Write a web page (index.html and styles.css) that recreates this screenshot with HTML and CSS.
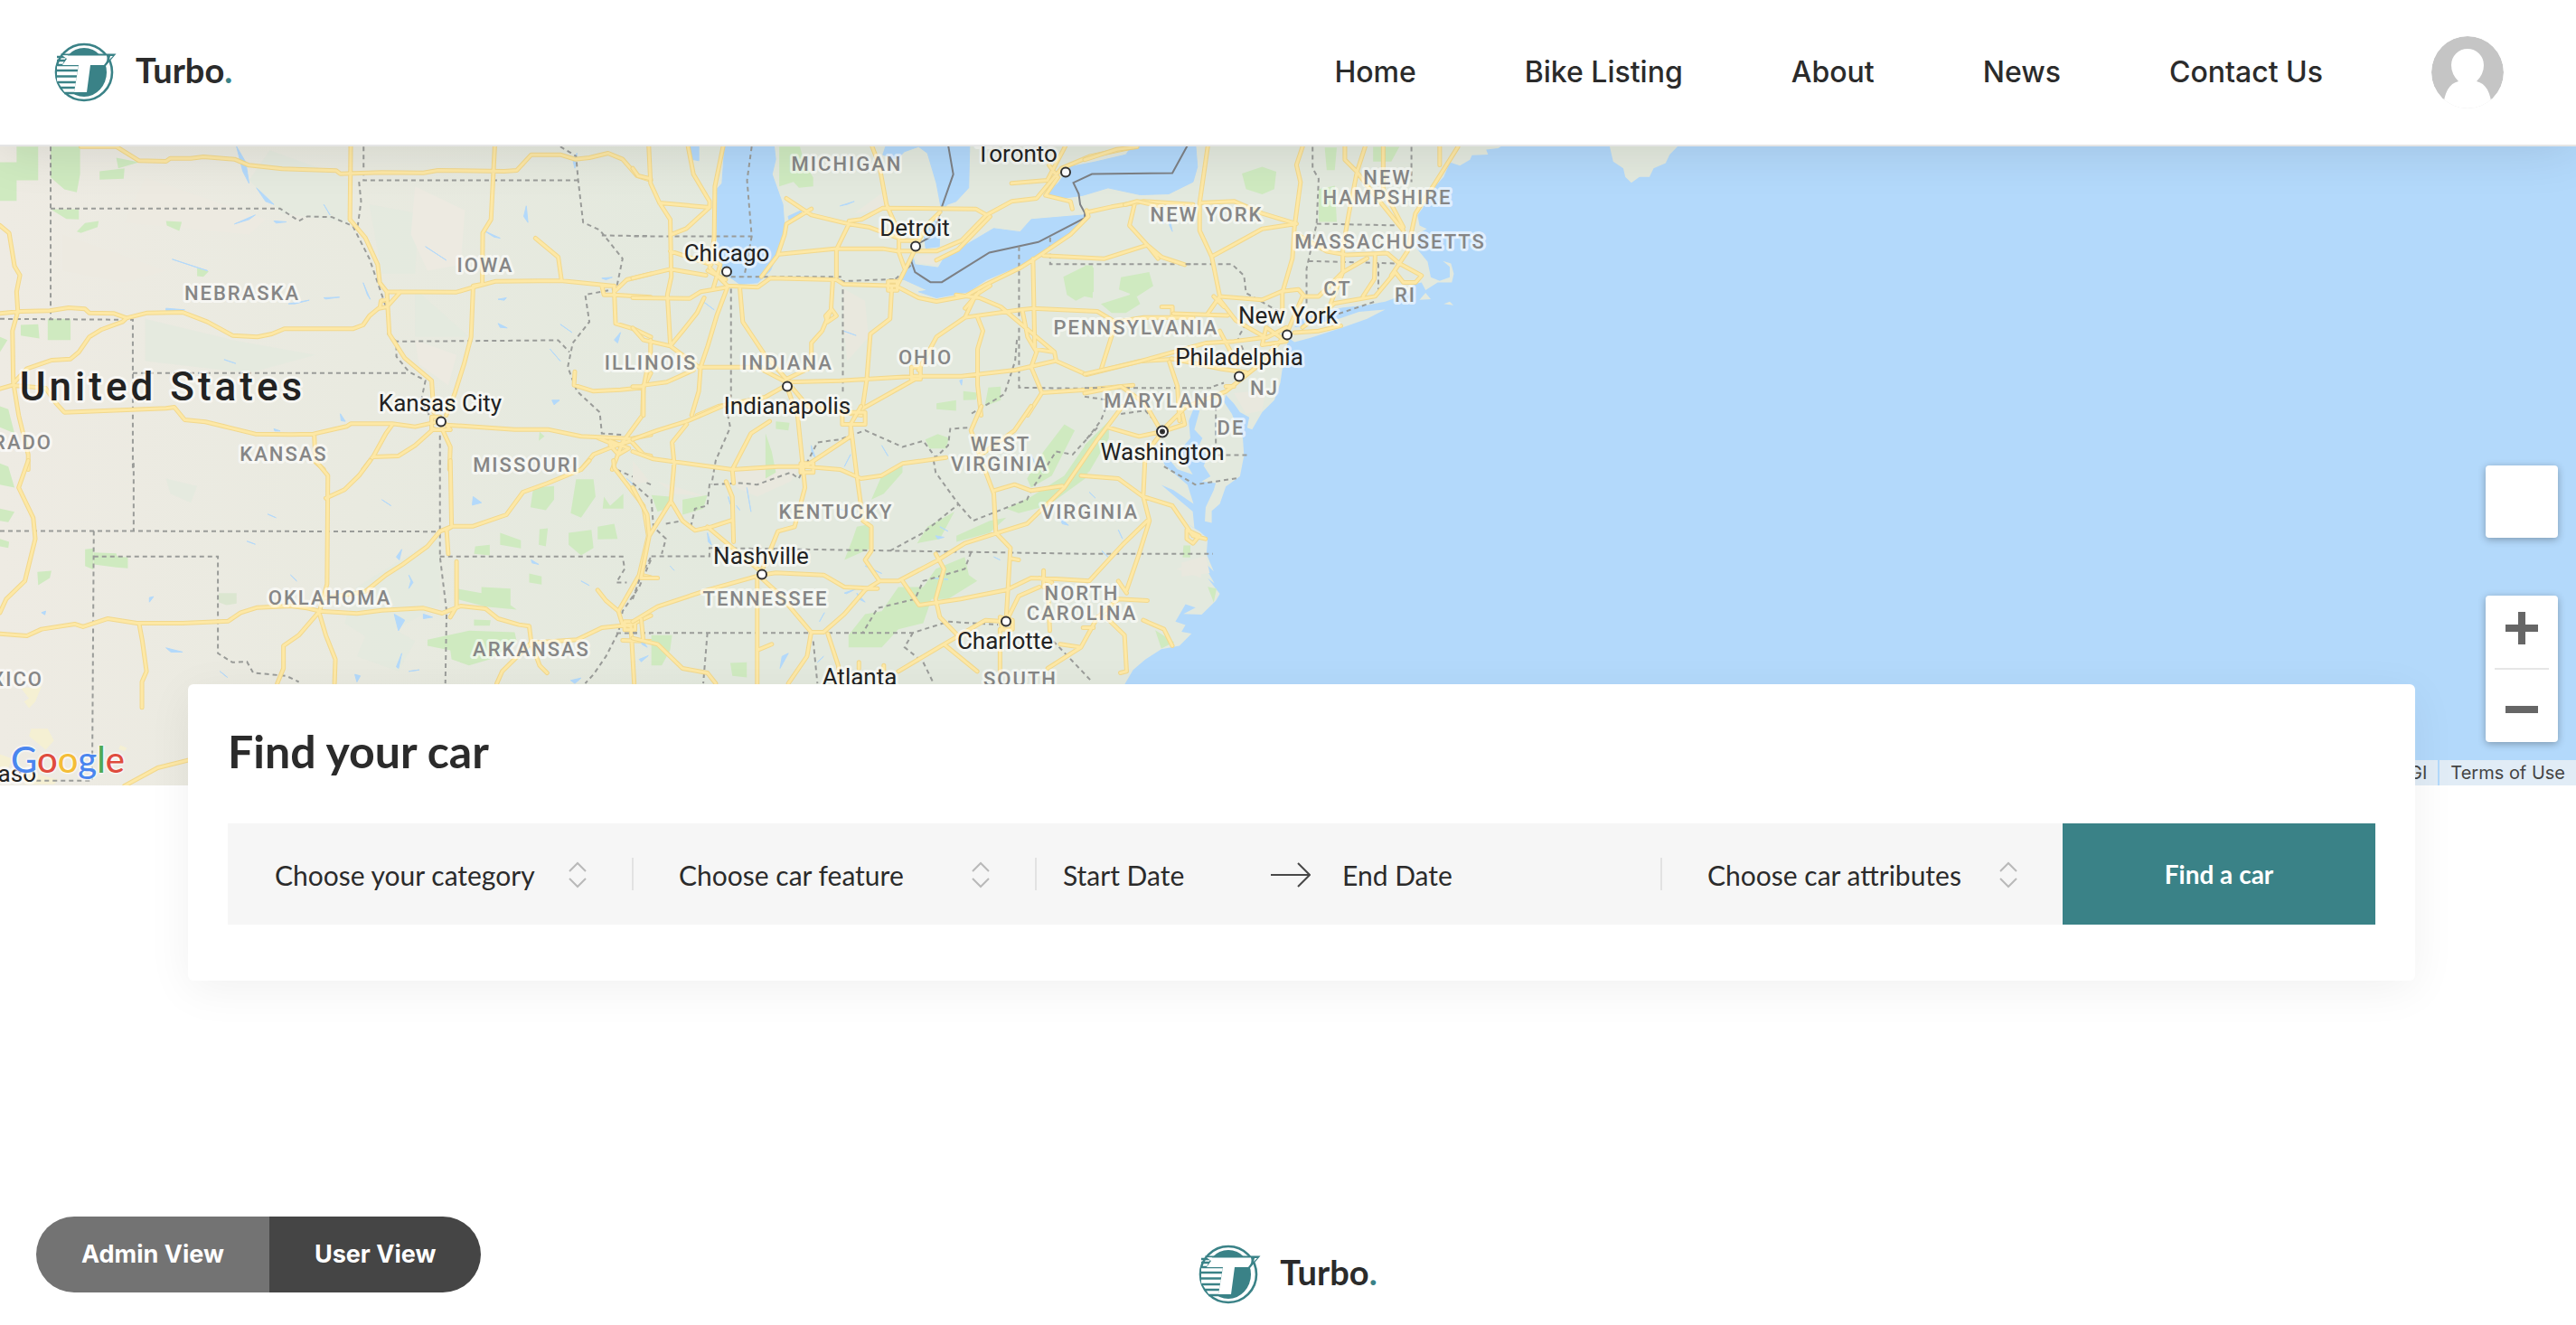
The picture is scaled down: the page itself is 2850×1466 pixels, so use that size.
FILE: index.html
```html
<!DOCTYPE html>
<html lang="en">
<head>
<meta charset="utf-8">
<title>Turbo.</title>
<meta name="viewport" content="width=device-width, initial-scale=1">
<link rel="stylesheet" href="styles.css">
</head>
<body>
<svg width="0" height="0" class="sprite" aria-hidden="true">
  <symbol id="emblem" viewBox="0 0 70 66">
    <circle cx="33" cy="33" r="31" fill="#fff" stroke="#3a8287" stroke-width="2.6"/>
    <ellipse cx="33" cy="33" rx="25" ry="27" fill="#3a8287"/>
    <path d="M3 25H27L22 56H12L3 42Z" fill="#fff"/>
    <path d="M3 20H14M3 16H15M2 25H27M2 31H26M3 37.500H25M4 44H24M7 50H23M11 56H30" stroke="#3a8287" stroke-width="2.600" fill="none"/>
    <path d="M7 12.500H68.500L57 26H50V14H8Z" fill="#3a8287"/>
    <path d="M9 14.500H58Q60 20 55 25H40L36 55H22L27 25H9L14 18Z" fill="#fff"/>
    <path d="M62 15H65L61 19Z" fill="#fff"/>
  </symbol>
  <symbol id="sorter" viewBox="0 0 20 30">
    <path d="M1 11L10 2 19 11M1 19L10 28 19 19" fill="none" stroke="#b9b9b9" stroke-width="2"/>
  </symbol>
</svg>

<header class="site-header">
  <a href="#" class="logo"><svg class="emblem" aria-hidden="true"><use href="#emblem"/></svg><span>Turbo<i>.</i></span></a>
  <nav class="main-nav">
    <a href="#">Home</a>
    <a href="#">Bike Listing</a>
    <a href="#">About</a>
    <a href="#">News</a>
    <a href="#">Contact Us</a>
    <a href="#" class="avatar" aria-label="Account">
      <svg viewBox="0 0 80 80"><circle cx="40" cy="40" r="40" fill="#c5c5c5"/><path d="M13 80C14 62 20 52 30 50Q22 42 22 32A18 18 0 0 1 58 32Q58 42 50 50C60 52 66 62 67 80Z" fill="#fff"/></svg>
    </a>
  </nav>
</header>

<main>
<section class="map" aria-label="Map">
<svg class="map-canvas" viewBox="0 162 2850 708" preserveAspectRatio="xMidYMid slice">
  <defs>
    <linearGradient id="ground" gradientUnits="userSpaceOnUse" x1="-2688" y1="0" x2="-900" y2="0">
      <stop offset="0" stop-color="#eeebe3"/><stop offset=".5" stop-color="#e9eae0"/><stop offset="1" stop-color="#e3e9de"/>
    </linearGradient>
    <path id="roads-nw" d="M195 8L280 8 335 55 400 57 410 47 460 47 490 42 565 50 600 70 680 82 810 88 820 98 920 94 1020 95 1055 87 1215 90 1245 87 1280 35 1350 35 1385 50 1420 45 1465 30 1500 50 1535 105 1568 120M845 8L843 250 880 310 910 400 915 460 932 490 938 630 975 710 1040 785 1045 890M932 490L1100 491 1140 475 1195 455 1350 453 1475 470M1192 8L1183 250 1163 295 1162 465 1140 470 1135 640 1118 730 1095 830 1075 900M1290 312L1345 375 1353 453M965 490L932 540 915 545 918 520 932 515M912 545L890 570 875 600 850 613 685 613 655 630 620 640 560 635 500 590 440 558 355 560 305 577 275 562 215 560 205 547 165 543 120 553 50 555 0 562M305 577L295 590 245 615 215 640 190 690 170 713 125 717 65 745 35 790M0 270L22 295 35 405 48 435 40 490 43 555 30 620 32 790 45 900 68 1030 68 1080M0 812L30 800 110 810 135 860 155 890 400 877 420 873 445 915 495 922 540 937 615 962 700 964 755 962 835 937 845 928 945 928 1000 938 1060 920M945 932L930 960 900 1035 875 1080M900 1038L960 1035 1000 1000 1045 945M757 962L760 1055 780 1080M1065 945L1085 1005 1083 1080M1040 905H1060L1085 948H1040ZM1075 932L1240 947 1320 947 1400 970 1480 975 1520 978 1568 965M1568 430L1510 450 1480 490 1483 595 1530 615 1568 640M1480 500L1568 508M1450 470H1480V500H1455ZM1385 755L1383 800 1430 820 1495 815 1550 808 1568 760M1550 810L1548 900 1500 990 1475 1080M1485 1000L1430 1030 1400 1080M1435 972L1485 1000 1520 985 1550 1030 1568 1035M1470 985L1515 1010 1490 1030 1470 1000Z"/>
    <path id="roads-sw" d="M68 0L45 90 80 190 85 260 60 400 15 460 0 505M0 575L65 582 100 560 180 543 200 552 260 525 330 540 440 540 550 533 580 505 620 488 700 483 740 490 770 500 860 508 920 497 1020 490 1065 507 1110 483 1170 492 1200 525 1250 545 1275 550 1280 605 1390 595 1450 555 1520 545M335 540L343 600 353 700 342 735 342 820M760 0L790 50 788 410 770 500 720 580 683 615 683 690 668 740M892 0L865 50 830 97 785 125M770 510L785 580 808 660 806 740M770 460L880 435 930 380 970 345 1030 285 1060 235 1090 218 1140 218 1220 180 1260 105 1320 75 1400 30 1420 0M1085 0L1088 220 1076 230 1080 310M1100 335L1100 485 1085 520M1280 605L1210 700 1197 740M1280 605L1300 680 1318 705M1478 0L1480 25 1550 150 1562 250 1540 380 1490 500 1500 545 1520 550 1528 740M1440 430L1460 465 1490 500M1505 535H1530V562H1505ZM1520 545L1568 515M1500 597L1568 600M1545 380L1568 388M453 995L380 1020 300 1080"/>
    <path id="roads-lakes" d="M45 8L50 130 75 195 105 250 108 440 97 500 105 660M0 80L15 105 50 115M155 8L170 100 215 190 215 210 75 195M253 8L230 140 228 310 215 410 265 470 350 475 385 445 570 450 590 465 735 470 800 510 850 522 930 505 990 465 1085 410 1125 380 1225 300 1275 240 1270 220M215 210L150 280 108 300M105 355L220 400M0 445L105 415 205 435M215 380L245 400 225 480M210 420L260 450M0 510L160 512 190 490 265 475M265 475L235 570 210 670 190 740 185 820 165 900M200 510L180 560 140 620 105 670 30 650 0 610M105 670L185 740 360 740M300 480L308 590 370 700 430 780M30 800L95 790 170 750M50 650L50 690 30 810 30 900M0 805L30 805M430 790L365 750M430 790L580 785 790 770 920 770 1070 750 1180 720M430 800L370 840 240 870 180 900M440 800L490 870 640 900M430 800L460 900M560 450L555 545 570 570 545 590 540 570 555 550 530 620 500 660 500 740 430 780M570 440L570 350 605 265 500 235 430 180M500 215L430 265 425 300 405 370 360 440M410 365L565 347 700 347 740 355 850 355 920 320 990 235 1060 190 1130 180 1200 80 1280 40 1400 10M850 385L910 350 1000 240M670 8L690 70 710 200 740 280M605 255L640 250 700 212 960 215 990 235M740 310L660 275 605 265M745 320H800M790 350L740 470M745 310V360L760 410M860 225L830 260 800 320M715 455H740V485H715ZM725 475L720 580 665 630 655 780 640 900M790 780L640 880M780 740H805V780H780ZM800 750L850 640 930 575 960 500 1000 470M930 575L1085 550 1120 545 1300 555 1350 590 1430 575 1568 575M965 575L980 620 965 680 965 800 975 900M905 500L970 510 1030 540 1130 640 1180 690 1185 720 1270 765 1320 750 1420 720 1568 710M930 545L970 490M1120 380L1125 680 1180 690M1090 550L1105 640 1130 690 1115 740 1145 825 1105 900M1145 825L1270 815 1400 800M1275 225L1340 208 1430 190 1568 200M1405 195L1390 270 1440 335 1470 380M1150 370L1320 380 1440 335 1480 375 1545 400M1060 130L1160 120 1210 8M1165 70L1190 110 1155 170 1225 190 1230 215M1350 600L1310 750M1480 540L1510 540 1510 575"/>
    <path id="roads-south" d="M0 110L60 80 130 50 215 0M130 60L95 120 100 190 92 315 40 430 20 570 60 570M92 315L120 380 150 412 190 400 240 378M0 150L50 175 240 210 350 200 415 200 500 210 550 240 600 230 650 190 755 170M330 50L285 90 240 210 243 255M225 250L240 300 243 450M180 400L310 550M395 0L410 200 415 270 390 400 350 415 310 550M550 0L525 60 525 100 415 200M505 20H560V60H505ZM405 190H435V220H405ZM525 60L540 230 555 380 575 400 575 480 560 510 595 580M0 270L35 360 40 430M310 560L345 553 460 560 510 600 590 605M595 580L640 580 730 515 800 455 880 420 950 390 1040 270 1120 110 1180 0M310 560L180 610 60 665 0 715M300 570V920M310 570L350 620 430 750 460 750 510 690 560 610 595 580M430 750L420 830 375 920M470 755L495 860 500 920M300 810L335 790M0 770L60 790 120 870 180 885 200 920M20 700L25 770M840 0L815 80 840 180 870 290 875 420 910 470 900 700M960 0L920 80 840 160M870 280L920 260 960 280 1035 265M1080 230L1170 240 1230 300 1300 330 1350 430 1380 440M1335 410L1365 430 1350 455 1335 440ZM1145 70L1220 100 1276 84 1235 160 1230 300 1245 380 1220 490 1190 610M1240 380L1180 460 1100 580 1020 573 960 570 900 610 790 640 690 660 650 580M910 505L930 510M980 570L1010 585M990 545V600M730 490L750 540 730 640 740 700 790 770M900 715L850 710 750 790 640 880M885 740V880M750 790L830 880M980 600L930 630 900 715M885 700L915 710 915 740 890 740ZM1000 600L1005 745M1030 790L1080 800 1120 700 1170 640 1240 645M1080 800L1000 870M1085 735H1110M1140 700L1185 760 1190 880 1175 885M1230 710L1280 740 1300 795M1276 84L1330 60 1320 0M1170 580L1190 620M545 850V870M605 860V880"/>
    <path id="roads-east" d="M305 8L285 170 285 250 315 325 335 440 305 490M540 8L525 60 535 110 520 240 515 330 490 430 490 490M0 45L80 15 130 8M100 175L130 165 190 180M285 170L370 165 440 200 525 230M525 230L440 245 370 290 315 325M645 8L645 45 675 80 655 200 640 300 640 370 610 460M695 8L675 80 700 120 790 250M740 8V130L790 240M925 8L870 110 820 200 800 310 780 345M880 8L880 60M525 260L600 310 650 320 750 315 780 345 835 380 820 400 790 400 770 370 720 440 620 460 540 530M780 345L760 380M640 370L700 330M720 320L718 390 690 440M335 440L440 450 490 425 530 420 545 440 580 440 640 370M335 450L375 510 450 560 500 530M345 470L320 440M220 490L355 495M440 560L370 570 300 575 130 630 0 665M500 550L430 640 350 715 250 760 190 830M335 540L380 640M520 545L580 540 635 525M500 550L540 440M215 620L340 650 400 660M0 720L90 700 150 750 190 830M210 630L230 700 235 800M450 530L500 570 440 580ZM350 700H370"/>
  </defs>

  <rect y="162" width="2850" height="708" fill="#b3d9fb"/>

  <!-- land and coastline -->
  <g transform="translate(1200 160) scale(.4464 .3827)">
    <path fill="url(#ground)" d="M1040 0L1025 12 995 16 1000 30 960 32 955 45 930 62 905 52 890 95 870 120 850 155 838 185 825 205 830 235 848 245 825 260 822 300 850 340 858 385 880 395 905 385 905 355 888 338 908 345 915 375 910 400 875 400 845 422 835 400 815 405 800 430 790 415 780 440 745 455 700 465 640 472 600 482 560 495 530 510 520 530 560 522 630 505 680 485 745 478 700 505 640 530 560 560 520 572 505 560 500 590 505 630 490 650 485 690 470 740 440 775 415 825 403 820 408 790 385 775 370 750 350 725 345 745 365 780 375 810 392 850 395 900 385 960 350 990 335 1040 315 1060 315 1095 298 1090 300 1050 320 1000 325 980 290 975 312 960 295 930 305 900 280 880 292 850 272 825 285 770 270 765 258 800 262 850 240 880 250 920 268 955 230 940 205 905 180 885 200 930 255 985 270 1040 220 1000 190 985 268 1062 272 1110 215 1070 285 1120 305 1140 302 1185 320 1235 285 1195 322 1270 305 1255 335 1300 325 1320 290 1360 245 1358 275 1340 250 1330 225 1380 250 1390 240 1410 265 1415 235 1450 190 1460 150 1490 120 1520 100 1560 60 1900H-2700V0Z"/>
    <path fill="#e3e9de" d="M1300 0L1310 50 1335 70 1340 95 1355 112 1375 95 1400 95 1410 70 1440 55 1450 30 1475 0ZM830 450L845 430 858 448ZM890 462L905 455 914 466Z"/>
    <path fill="#cfeac0" d="M390 85L440 65 475 80 470 130 440 145 400 130ZM595 10H625L620 75H600ZM715 8H780L760 50H715ZM580 130L620 120 625 225 580 225ZM0 350H20V445L0 440ZM90 385L160 370 170 410 130 440 85 420ZM245 1160H262V1195H243ZM175 1405L222 1440 190 1458ZM305 1280L327 1285 320 1325ZM0 870L60 800 60 850 10 950Z"/>
    <path fill="#e9e8de" d="M240 1210L300 1190 310 1240 240 1250ZM370 720L450 710 440 770 400 780Z"/>
  </g>

  <!-- west -->
  <g transform="translate(0 160) scale(.4592 .3333)">
    <path fill="#e3e9de" opacity=".7" d="M650 20L850 120 840 260 680 230 600 120ZM890 200L1010 230 1000 430 920 430ZM350 580L560 650 760 700 600 760 350 720ZM1000 480L1130 640 1000 640Z"/>
    <path fill="#edeae1" d="M1000 140L1120 220 1110 400 1030 420 990 300ZM350 110L640 250 600 300 300 260ZM150 300L400 420 300 460 150 420ZM1000 650L1100 700 1080 800 1010 730Z"/>
    <path fill="#cfeac0" d="M40 8H92V120H40V188H0V60H40ZM122 8H193V100L185 160 155 150 122 110ZM240 90L300 80 298 115 240 118ZM280 45L335 60 285 80ZM122 216H190V250L160 248ZM185 290L205 262 238 255 235 275 195 295ZM400 255L438 258 432 288 402 270ZM475 412L503 422 490 440 475 438ZM115 580H170V650H115ZM50 600L92 598 95 645 50 635ZM0 640L18 650 0 690ZM0 870L20 880 35 960 0 940ZM1300 955L1312 970 1298 985Z"/>
    <path class="water" d="M570 8L592 60 600 130 585 90ZM618 145L660 200 640 190ZM565 265L615 235 600 250ZM415 382L500 420 480 412ZM780 200L795 235ZM660 255L690 258 665 262ZM400 545L445 550 400 552ZM695 530L745 518 710 530ZM780 510L818 508 785 514ZM820 895L832 920 822 918ZM1170 290L1205 312 1190 308ZM1268 205L1272 260 1262 240ZM1200 515L1220 510 1215 518ZM1350 598L1378 625ZM1450 445L1475 442 1460 450ZM1025 340L1075 385ZM875 460L892 515 885 500ZM1330 850L1348 850 1335 865ZM1325 680L1350 720ZM1480 650L1495 625 1488 660ZM540 715L568 728 550 720ZM1390 30L1385 80 1380 50ZM1200 595L1222 610 1205 608ZM660 945L675 952 662 952Z"/>
    <path class="border" d="M122 8V580M122 214H675L720 255 740 240 800 242 850 272 890 380 915 480 935 560 935 630 955 655 955 705 985 755 1025 785 1015 850 1040 915M876 8V120H1393M865 125L870 190 862 270M1350 8L1388 40 1393 120 1405 260 1445 285 1500 380 1485 480 1410 500 1420 590 1380 660 1368 740 1390 820 1445 890 1450 960 1500 965M1450 303L1568 305M0 580L320 583V1080M320 760H985M950 655L1345 651 1372 690M1060 940V1080"/>
    <use href="#roads-nw" class="casing"/><use href="#roads-nw" class="road"/>
  </g>
  <g transform="translate(0 510) scale(.4592 .3333)">
    <path fill="#e3e9de" opacity=".7" d="M860 420L1060 250 1060 480 900 600 830 540ZM900 520L1000 600 960 700 860 650ZM400 60L475 85 460 140 410 110Z"/>
    <path fill="#cfeac0" d="M226 305L280 308 282 318 308 322V358L280 355 226 345ZM205 295L225 292V362L205 350ZM90 370L124 366 120 390 92 414ZM1100 425L1160 440V420L1230 425V480L1245 495 1170 485 1100 460ZM1030 595L1130 565 1240 570 1245 600 1180 660 1130 680 1088 660 1085 630 1030 615ZM1285 90L1335 85V130L1315 165 1278 155ZM1388 62H1430L1435 120 1400 190 1375 175ZM1205 240L1255 265V292L1205 280ZM1300 228L1320 225 1315 285 1298 280ZM1370 240L1425 230 1430 290 1400 315 1370 280ZM1440 220L1480 210 1488 260 1440 262ZM1455 120L1470 150 1502 110V160H1452ZM1275 375L1305 385 1305 412 1275 405ZM1145 285L1180 280 1180 315 1142 310ZM1142 528L1182 530 1180 548H1142ZM0 10L20 20 35 90 0 80ZM0 160L35 170 20 205 0 200ZM0 260L22 270 20 290 0 285Z"/>
    <path fill="#dbe6d0" d="M527 440H570V475L545 480 527 470Z"/>
    <path fill="#f5f0d3" d="M50 755L100 750 85 800 70 822 58 800 70 790ZM75 890L115 890 130 930 110 960 70 915ZM0 975L30 990 20 1020 0 1020ZM290 945L306 955 300 965 286 958ZM60 1030L140 1060 130 1075 60 1075Z"/>
    <path class="water" d="M1140 120L1160 140 1138 148ZM955 320L968 295 962 330ZM985 380L995 405 985 425 990 400ZM950 510L975 530 960 565ZM1020 510L1042 520 1020 525ZM360 455L370 452 360 470ZM400 622L440 636 412 636ZM530 700L548 720ZM100 505L110 500 108 512ZM700 380L715 400ZM920 130L942 150ZM645 178L665 190ZM595 268L615 278ZM985 700L1010 695ZM955 685L968 640 960 690ZM855 710L868 715 860 735ZM1540 660L1562 648 1545 668ZM1280 330L1298 345 1282 340ZM1375 730L1400 722 1385 740ZM1510 60L1530 85ZM1400 400L1420 415Z"/>
    <path class="border" d="M0 234H225L1059 236M322 8V234M226 234L222 1063H80M226 319H525V640L560 670 595 668 610 705 690 715 720 735M1060 0V319L1076 500 1073 740M1060 319H1500L1505 360 1485 405H1510M1568 80L1485 30M1568 330L1540 420 1500 500 1490 570 1460 650 1430 710 1410 740M1485 573H1568"/>
    <use href="#roads-sw" class="casing"/><use href="#roads-sw" class="road"/>
  </g>

  <!-- great lakes -->
  <g transform="translate(700 160) scale(.3954 .3333)">
    <path fill="#e9e8de" d="M590 480L650 520 660 640 600 720 590 600ZM620 230L700 160 720 210ZM790 370L860 365 850 400 800 395Z"/>
    <path fill="#cfeac0" d="M410 8H468L480 60 505 110 505 140 465 145 450 125 410 140ZM1205 440L1265 405 1290 410V490L1240 520 1215 500ZM1310 530L1390 500 1400 480 1420 530 1380 560 1340 560ZM995 808L1030 805 1030 850 985 870ZM925 820L965 825 960 848 925 850ZM850 860L905 850 905 885 850 880Z"/>
    <path class="water" d="M258 0L250 130 235 150 236 300 240 390 270 440 300 465 350 460 385 420 410 350 425 280 420 200 390 100 400 50 395 0ZM710 0L700 35 740 50 760 25 800 8 825 30 850 130 865 225 880 200 905 190 940 145 943 0ZM860 250L858 340 820 345 815 300 830 250ZM780 355L790 400 855 410 870 380 910 350 1010 280 1075 290 1130 298 1085 290 1115 250 1265 235 1250 270 1180 330 1130 380 1060 415 990 450 940 490 850 510 800 490 825 485 760 450 745 450 770 400ZM1190 130L1160 165 1200 180 1260 170 1330 145 1420 168 1500 165 1568 125 1580 75 1575 0H1400L1380 35 1290 60 1225 75ZM160 0L165 50 185 55 185 0ZM435 240L480 215 440 260ZM580 205L620 190 600 200ZM200 525L228 550ZM590 620L625 635ZM1500 230L1510 290 1502 270ZM1480 235L1485 265ZM915 785L922 782 920 800Z"/>
    <path class="frontier" d="M883 5L897 100 860 225 855 250 830 310 800 330 783 350 780 390 790 425 833 458H865L998 360 1135 325 1265 245V228L1252 200 1248 165 1233 128 1285 99 1510 96 1552 5"/>
    <path class="border" d="M333 8L320 120 333 306H0M333 306L312 440M275 440H585V455L735 448M588 455V830M275 480V840M1081 340V808L1300 812M1168 310V398H1568M1075 650L1070 720 1040 830 940 900M735 448L780 400"/>
    <use href="#roads-lakes" class="casing"/><use href="#roads-lakes" class="road"/>
  </g>

  <!-- appalachia and the south -->
  <g transform="translate(700 450) scale(.4592 .3333)">
    <path fill="#e9e8de" d="M0 180L40 250 0 260ZM240 210L400 210 380 250 300 300 250 270ZM60 250L180 300 100 290ZM1310 540L1370 510 1370 570Z"/>
    <path fill="#cfeac0" d="M520 760L560 690 600 680 640 600 700 600 730 540 800 500 810 560 830 580 760 640 720 640 700 720 640 740 600 800 520 800ZM540 400L575 390 575 470 510 510 530 440ZM780 430L860 380 900 370 860 420 780 450ZM900 340L960 300 1040 230 1090 130 1150 60 1090 240 1000 330 930 355ZM950 240L990 150 1040 60 1065 80 1010 230 960 270ZM710 400L775 350 740 440 685 455ZM705 110L735 92 762 105 755 140 715 140ZM345 50L378 55 375 80 345 75ZM320 90L335 150 345 220 320 240ZM120 310L180 295 170 340 120 360ZM45 295L90 300 80 340 60 350ZM600 230L650 190 650 220 605 290 575 310ZM45 760H95L90 810 70 860 45 860ZM235 852L275 850 275 900 240 895Z"/>
    <path class="water" d="M430 130L440 170 432 160ZM510 620L540 605 515 622ZM450 715L462 685ZM730 430L750 435 735 440ZM740 400L760 415ZM540 620L560 650 545 640ZM250 330L258 345ZM495 340L520 350ZM600 130L615 165ZM510 200L525 160ZM20 770L35 800 22 790ZM360 830L375 820 355 870ZM445 850L460 830ZM1030 370L1050 395 1035 390ZM1100 285L1115 305ZM1170 410L1180 440ZM1130 480L1145 500ZM560 530L600 555ZM720 570L760 575ZM180 420L190 460 182 450ZM275 270L285 350ZM960 160L972 200ZM90 530L100 545ZM230 300L235 325ZM870 500L885 510ZM1040 690L1050 705Z"/>
    <path class="border" d="M0 255L45 310 50 400 80 440 70 490M45 498H185V470L1100 490H1398M620 480L700 420 785 325 820 380 950 310 960 280 1020 150 1060 160 1120 70M725 180L730 220 785 325M140 400L150 340 180 330 185 260 260 255 300 260 380 220 400 240 445 120 500 110 560 80 650 135 700 115 730 170 760 130 765 75 820 70M0 752H675L760 715 880 725M180 752L170 920M435 780L445 920M815 485L800 540 700 580 680 640 590 670 555 750M675 752L655 800 700 850 725 920M1000 760L1105 912M225 0L235 70 200 180 190 260M1280 200L1355 260 1460 238M1410 162H1480M1405 0V160M0 640L20 560 45 498M80 390L120 380 140 400"/>
    <use href="#roads-south" class="casing"/><use href="#roads-south" class="road"/>
  </g>

  <!-- east coast -->
  <g transform="translate(1200 160) scale(.4464 .3827)">
    <path class="border" d="M565 8L565 70 580 100 575 230 550 360 550 460M575 230L780 235M810 8V110M555 338L770 345M728 345V420M250 347H365L395 380 400 430 490 490M0 705H320M400 520L380 560 395 600M630 490L720 455M320 700L345 690M0 730L60 740 40 800 0 860M90 780L150 770 190 820"/>
    <use href="#roads-east" class="casing"/><use href="#roads-east" class="road"/>
  </g>

  <g class="states">
    <text x="268" y="332">NEBRASKA</text><text x="537" y="301">IOWA</text><text x="314" y="510">KANSAS</text>
    <text x="582" y="522">MISSOURI</text><text x="720" y="409">ILLINOIS</text><text x="871" y="409">INDIANA</text>
    <text x="1024" y="403">OHIO</text><text x="937" y="189">MICHIGAN</text><text x="1335" y="245">NEW YORK</text>
    <text x="1535" y="204">NEW</text><text x="1535" y="226">HAMPSHIRE</text><text x="1538" y="275">MASSACHUSETTS</text>
    <text x="1480" y="327">CT</text><text x="1555" y="334">RI</text><text x="1257" y="370">PENNSYLVANIA</text>
    <text x="1288" y="451">MARYLAND</text><text x="1399" y="437">NJ</text><text x="1362" y="481">DE</text>
    <text x="1107" y="499">WEST</text><text x="1106" y="521">VIRGINIA</text><text x="1206" y="574">VIRGINIA</text>
    <text x="925" y="574">KENTUCKY</text><text x="847" y="670">TENNESSEE</text><text x="1197" y="664">NORTH</text>
    <text x="1197" y="686">CAROLINA</text><text x="1129" y="759">SOUTH</text><text x="365" y="669">OKLAHOMA</text>
    <text x="588" y="726">ARKANSAS</text>
    <text x="58" y="497" class="end">COLORADO</text><text x="48" y="759" class="end">NEW MEXICO</text>
  </g>
  <g class="pins">
    <circle cx="804" cy="301" r="5"/><circle cx="871" cy="428" r="5"/><circle cx="1013" cy="273" r="5"/>
    <circle cx="1179" cy="191" r="5"/><circle cx="488" cy="467" r="5"/><circle cx="1424" cy="371" r="5"/>
    <circle cx="1371" cy="417" r="5"/><circle cx="843" cy="636" r="5"/><circle cx="1113" cy="688" r="5"/>
    <circle cx="1286" cy="478" r="6"/><circle cx="1286" cy="478" r="2" class="core"/>
  </g>
  <g class="cities">
    <text x="804" y="289">Chicago</text><text x="871" y="458">Indianapolis</text><text x="1012" y="261">Detroit</text>
    <text x="1125" y="179">Toronto</text><text x="487" y="455">Kansas City</text><text x="1425" y="358">New York</text>
    <text x="1371" y="404">Philadelphia</text><text x="1286" y="509">Washington</text><text x="842" y="624">Nashville</text>
    <text x="1112" y="718">Charlotte</text><text x="951" y="758">Atlanta</text>
    <text x="40" y="865" class="end">El Paso</text>
  </g>
  <text x="180" y="443" class="country">United States</text>
</svg>
  <a href="#" class="google" aria-label="Google"><span class="b">G</span><span class="r">o</span><span class="y">o</span><span class="b">g</span><span class="g">l</span><span class="r">e</span></a>
  <div class="map-controls">
    <button type="button" class="control fullscreen" aria-label="Toggle fullscreen view"></button>
    <div class="control zoom">
      <button type="button" aria-label="Zoom in"><svg viewBox="0 0 36 36"><path d="M0 14H14V0H22V14H36V22H22V36H14V22H0Z"/></svg></button>
      <button type="button" aria-label="Zoom out"><svg viewBox="0 0 36 36"><path d="M0 14H36V22H0Z"/></svg></button>
    </div>
  </div>
  <div class="map-legal"><span>Map data ©2019 Google, INEGI</span><a href="#">Terms of Use</a></div>
</section>

<section class="search-card">
  <h1>Find your car</h1>
  <form class="search-bar">
    <div class="field">
      <select aria-label="Category"><option>Choose your category</option></select>
      <svg class="sorter" aria-hidden="true"><use href="#sorter"/></svg>
    </div>
    <div class="field">
      <select aria-label="Feature"><option>Choose car feature</option></select>
      <svg class="sorter" aria-hidden="true"><use href="#sorter"/></svg>
    </div>
    <div class="field dates">
      <input type="text" aria-label="Start date" placeholder="Start Date">
      <svg class="arrow" viewBox="0 0 44 28" aria-hidden="true"><path d="M0 14H43M30 1L43 14 30 27" fill="none" stroke="#484848" stroke-width="2"/></svg>
      <input type="text" aria-label="End date" placeholder="End Date">
    </div>
    <div class="field">
      <select aria-label="Attributes"><option>Choose car attributes</option></select>
      <svg class="sorter" aria-hidden="true"><use href="#sorter"/></svg>
    </div>
    <button type="submit">Find a car</button>
  </form>
</section>
</main>

<footer class="site-footer">
  <a href="#" class="logo"><svg class="emblem" aria-hidden="true"><use href="#emblem"/></svg><span>Turbo<i>.</i></span></a>
</footer>

<div class="view-switch">
  <button type="button">Admin View</button>
  <button type="button" class="active">User View</button>
</div>
</body>
</html>
```
FILE: styles.css
```css
* { box-sizing: border-box; }
body {
  margin: 0;
  min-height: 100vh;
  display: flex;
  flex-direction: column;
  background: #fff;
  color: #2b2b2b;
  font-family: Lato, sans-serif;
}
a { color: inherit; text-decoration: none; }
button, select, input { font: inherit; color: inherit; border: 0; margin: 0; padding: 0; background: none; }
.sprite { position: absolute; }

/* header */
.site-header {
  position: relative;
  z-index: 2;
  display: flex;
  align-items: center;
  justify-content: space-between;
  height: 162px;
  padding: 0 80px 0 60px;
  background: #fff;
  border-bottom: 2px solid #e5e5e5;
  box-shadow: 0 0 60px rgba(0, 0, 0, .12);
}
.logo {
  display: flex;
  align-items: center;
  gap: 20px;
  font-size: 38px;
  font-weight: 700;
  line-height: 60px;
}
.logo span { padding-bottom: 6px; }
.logo i { color: #3a8287; font-style: normal; }
.emblem { width: 70px; height: 66px; }
.main-nav {
  display: flex;
  align-items: center;
  gap: 120px;
  font: 500 32px/40px Inter, sans-serif;
}
.avatar, .avatar svg { display: block; width: 80px; height: 80px; }
.avatar { border-radius: 50%; overflow: hidden; }

/* map */
.map { position: relative; height: 707px; overflow: hidden; background: #b3d9fb; }
.map-canvas { display: block; width: 100%; height: 100%; font-family: Roboto, sans-serif; }
.map-canvas path { vector-effect: non-scaling-stroke; }
.map-canvas text { text-anchor: middle; paint-order: stroke; stroke-linejoin: round; stroke: rgba(255, 255, 255, .6); stroke-width: 6px; }
.map-canvas .end { text-anchor: end; }
.water { fill: #b3d9fb; stroke: #b3d9fb; stroke-width: 1; }
.border { fill: none; stroke: #9a9c99; stroke-width: 2; stroke-dasharray: 5 4; }
.frontier { fill: none; stroke: #7d8085; stroke-width: 2; }
.casing { fill: none; stroke: #f2d88c; stroke-width: 5; stroke-linejoin: round; stroke-linecap: round; }
.road { fill: none; stroke: #fde8a6; stroke-width: 3; stroke-linejoin: round; stroke-linecap: round; }
.states { font-size: 22px; font-weight: 500; letter-spacing: 2px; fill: #868686; }
.cities { font-size: 26px; fill: #222; }
.country { font-size: 44px; font-weight: 500; letter-spacing: 4px; fill: #222; }
.pins { fill: #fff; stroke: #333; stroke-width: 2; }
.pins .core { fill: #222; }
.google {
  position: absolute;
  left: 12px;
  bottom: 5px;
  font: 500 40px/48px Lato, sans-serif;
  text-shadow: 0 0 3px #fff, 0 0 3px #fff, 0 0 3px #fff;
}
.google .b { color: #4b86ee; }
.google .r { color: #df4c3e; }
.google .y { color: #f4bd37; }
.google .g { color: #4caa57; }
.map-controls {
  position: absolute;
  right: 20px;
  bottom: 48px;
  display: grid;
  gap: 64px;
  width: 80px;
}
.control { background: #fff; border-radius: 4px; box-shadow: 0 2px 8px rgba(0, 0, 0, .3); }
.fullscreen { height: 80px; }
.zoom { display: grid; justify-items: center; }
.zoom button { display: grid; place-items: center; width: 60px; height: 80px; }
.zoom button + button { height: 82px; border-top: 2px solid #e6e6e6; }
.zoom svg { width: 36px; height: 36px; fill: #666; margin-bottom: 8px; }
.zoom button + button svg { margin: 0 0 -8px; }
.map-legal {
  position: absolute;
  right: 0;
  bottom: 0;
  display: flex;
  gap: 2px;
  font: 20px/28px Inter, sans-serif;
  color: #444;
}
.map-legal > * { padding: 0 12px; background: #e1ecf6; }

/* search card */
.search-card {
  position: relative;
  margin: -112px 178px 0 208px;
  padding: 42px 44px 62px;
  background: #fff;
  border-radius: 6px;
  box-shadow: 0 10px 50px rgba(0, 0, 0, .06);
}
.search-card h1 { margin: 0 0 48px; font-size: 50px; line-height: 64px; font-weight: 700; }
.search-bar {
  display: grid;
  grid-template-columns: 447fr 446fr 692fr 445fr 346fr;
  height: 112px;
  background: #f6f6f6;
  font-size: 30px;
  line-height: 40px;
}
.field { position: relative; display: flex; align-items: center; padding: 2px 50px 0 52px; }
.field + .field::before {
  content: "";
  position: absolute;
  left: 0;
  top: 38px;
  width: 2px;
  height: 36px;
  background: #e2e2e2;
}
.field select { flex: 1; min-width: 0; height: 60px; appearance: none; }
.sorter { flex: none; width: 20px; height: 30px; }
.dates { padding-left: 31px; padding-right: 20px; }
.dates input { width: 230px; height: 60px; }
.dates input + .arrow + input { flex: 1; margin-left: 35px; }
.dates input::placeholder { color: #2b2b2b; opacity: 1; }
.arrow { flex: none; width: 44px; height: 28px; }
.search-bar button { background: #3a8287; color: #fff; font-size: 28px; font-weight: 700; }

/* footer */
.site-footer { display: flex; justify-content: center; padding: 292px 0 20px; }

/* view switch */
.view-switch {
  position: fixed;
  left: 40px;
  bottom: 36px;
  display: flex;
  border-radius: 42px;
  overflow: hidden;
  color: #fff;
  font: 700 27px/84px Inter, sans-serif;
}
.view-switch button { padding: 0 50px; background: #737373; }
.view-switch .active { background: #454545; }
```
